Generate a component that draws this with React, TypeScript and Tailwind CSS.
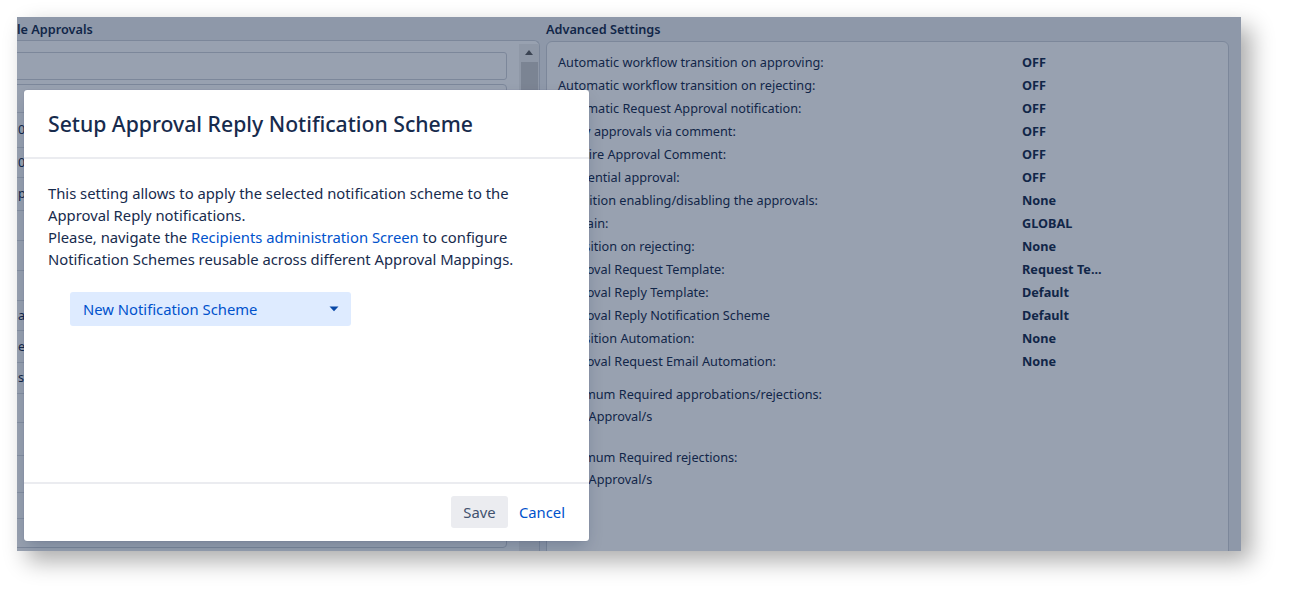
import React from "react";

const font = { fontFamily: '"Noto Sans", "Open Sans", Arial, sans-serif' };

const settings: [string, string][] = [
    ["Automatic workflow transition on approving:", "OFF"],
    ["Automatic workflow transition on rejecting:", "OFF"],
    ["Automatic Request Approval notification:", "OFF"],
    ["Reply approvals via comment:", "OFF"],
    ["Require Approval Comment:", "OFF"],
    ["Sequential approval:", "OFF"],
    ["Condition enabling/disabling the approvals:", "None"],
    ["Domain:", "GLOBAL"],
    ["Transition on rejecting:", "None"],
    ["Approval Request Template:", "Request Te..."],
    ["Approval Reply Template:", "Default"],
    ["Approval Reply Notification Scheme", "Default"],
    ["Transition Automation:", "None"],
    ["Approval Request Email Automation:", "None"],
];

// rows of the table hidden behind the dialog, only a few px show at the left
const tableRows = [
    { h: "h-[28px]", t: "" },
    { h: "h-[35px]", t: "0" },
    { h: "h-[30px]", t: "0" },
    { h: "h-[33px]", t: "p" },
    { h: "h-[30px]", t: "" },
    { h: "h-[30px]", t: "" },
    { h: "h-[30px]", t: "" },
    { h: "h-[30px]", t: "a" },
    { h: "h-[32px]", t: "ea" },
    { h: "h-[31px]", t: "st" },
    { h: "h-[29px]", t: "" },
    { h: "h-[33px]", t: "" },
    { h: "h-[37px]", t: "" },
    { h: "h-[26px]", t: "" },
];

function Dialog() {
    return (
        <div className="absolute left-[7px] top-[73px] flex h-[451px] w-[565px] flex-col rounded-[3px] bg-white shadow-[0_8px_16px_-4px_rgba(9,30,66,0.25),0_0_1px_rgba(9,30,66,0.31)]">
            <div className="flex h-[69px] shrink-0 items-center border-b-2 border-[#ebecf0] px-[24px] pt-[1px]">
                <h2 className="text-[21.2px] font-medium text-[#172b4d]">Setup Approval Reply Notification Scheme</h2>
            </div>
            <div className="flex-1 px-[24px] pt-[23px] text-[14.8px] leading-[22px] text-[#172b4d]">
                <p>
                    This setting allows to apply the selected notification scheme to the
                    <br />
                    Approval Reply notifications.
                    <br />
                    Please, navigate the <a className="text-[#0052cc]">Recipients administration Screen</a> to configure
                    <br />
                    Notification Schemes reusable across different Approval Mappings.
                </p>
                <button className="ml-[22px] mt-[22px] flex h-[34px] w-[281px] items-center justify-between rounded-[3px] bg-[#deebff] pl-[13px] pr-[12px] text-[14.8px] text-[#0052cc]">
                    <span>New Notification Scheme</span>
                    <svg width="10" height="6" viewBox="0 0 10 6" className="text-[#0747a6]">
                        <path d="M0.5 0.5h9L5 5.2z" fill="currentColor" />
                    </svg>
                </button>
            </div>
            <div className="flex h-[59px] shrink-0 items-center justify-end gap-[11px] border-t-2 border-[#ebecf0] px-[24px] pb-[1px]">
                <button className="h-[32px] w-[57px] rounded-[3px] bg-[#ebecf0] text-[14.8px] text-[#42526e]">Save</button>
                <a className="text-[14.8px] text-[#0052cc]">Cancel</a>
            </div>
        </div>
    );
}

export default function App() {
    return (
        <div className="h-[600px] w-[1289px] bg-white pl-[17px] pt-[17px]" style={font}>
            <div className="relative h-[534px] w-[1224px] overflow-hidden bg-[#eef0f3] text-[#172b4d] shadow-[10px_10px_22px_rgba(0,0,0,0.33)]">
                <div className="flex">
                    {/* left: approvals list */}
                    <div className="w-[523px] shrink-0">
                        <div className="flex h-[23px] items-center pt-[3px] text-[12.7px] font-semibold">le Approvals</div>
                        <div className="flex h-[520px] rounded-tr-[6px] border-r border-t border-[#cfd3da] bg-white">
                            <div className="flex-1 pr-[12px] pt-[11px]">
                                <div className="-ml-[10px] h-[28px] rounded-[3px] border border-[#cfd3da]" />
                                <div className="-ml-[10px] mt-[4px] h-[464px] overflow-hidden rounded-[4px] border border-[#cfd3da]">
                                    {tableRows.map((r, i) => (
                                        <div
                                            key={i}
                                            className={`${r.h} flex items-center border-b border-[#dfe1e6] pl-[10px] text-[12.7px]`}
                                        >
                                            {r.t}
                                        </div>
                                    ))}
                                </div>
                            </div>
                            <div className="mt-[3px] flex h-[520px] w-[20px] flex-col items-center bg-[#f0f0f0]">
                                <svg width="8" height="5" viewBox="0 0 8 5" className="mt-[6px] text-[#606060]">
                                    <path d="M0 5L4 0l4 5z" fill="currentColor" />
                                </svg>
                                <div className="mt-[7px] h-[260px] w-[17px] bg-[#cdcdcd]" />
                            </div>
                        </div>
                    </div>

                    {/* right: advanced settings */}
                    <div className="ml-[6px] w-[683px] shrink-0">
                        <div className="flex h-[24px] items-center pt-[2px] text-[12.7px] font-semibold">Advanced Settings</div>
                        <div className="h-[530px] rounded-[6px] border border-[#cfd3da] bg-white pl-[11px] pt-[9px] text-[12.7px]">
                            {settings.map(([label, value]) => (
                                <div key={label} className="grid h-[23px] grid-cols-[464px_1fr] items-center">
                                    <span>{label}</span>
                                    <span className="font-bold">{value}</span>
                                </div>
                            ))}
                            <div className="mt-[10px] leading-[22px]">
                                <div>Minimum Required approbations/rejections:</div>
                                <div className="pl-[20px]">1 Approval/s</div>
                            </div>
                            <div className="mt-[19px] leading-[22px]">
                                <div>Minimum Required rejections:</div>
                                <div className="pl-[20px]">1 Approval/s</div>
                            </div>
                        </div>
                    </div>
                </div>

                {/* blanket */}
                <div className="absolute inset-0 bg-[rgba(9,30,66,0.42)]" />
                <Dialog />
            </div>
        </div>
    );
}
